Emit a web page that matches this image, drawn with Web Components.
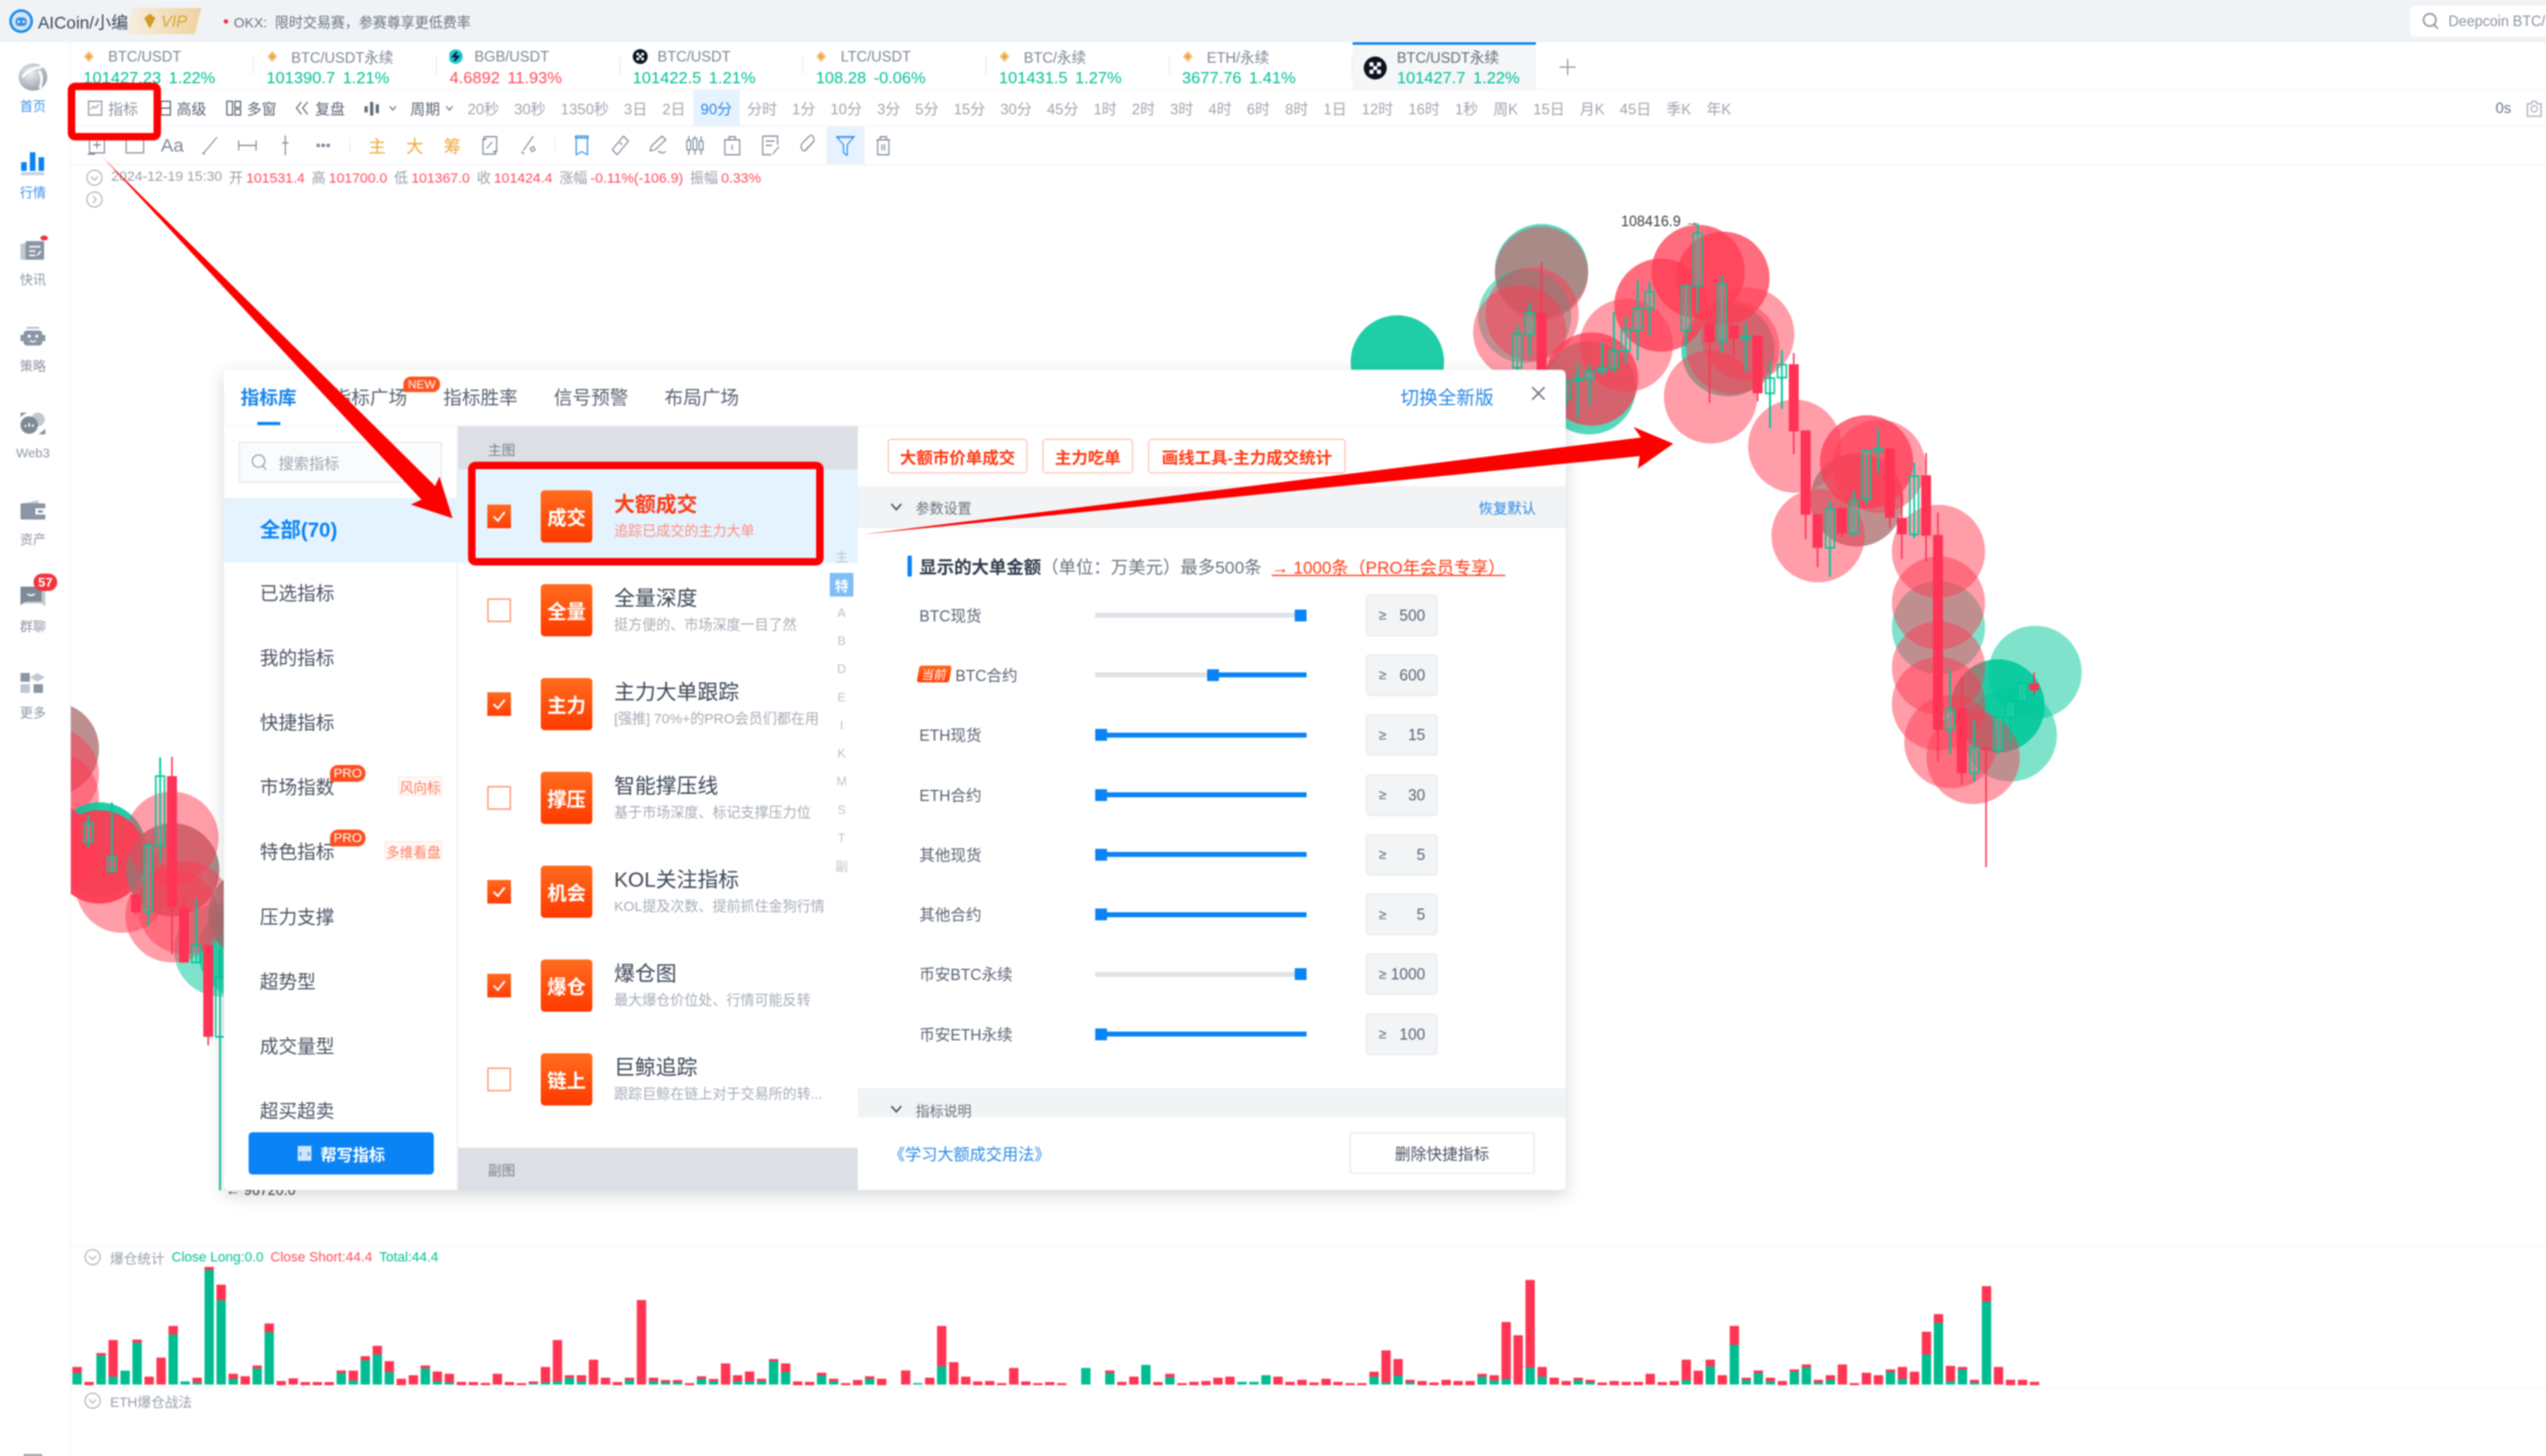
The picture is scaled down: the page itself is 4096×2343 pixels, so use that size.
<!DOCTYPE html>
<html lang="zh"><head><meta charset="utf-8"><title>AICoin</title>
<style>
html,body{margin:0;padding:0;background:#fff;overflow:hidden}
body{font-family:"Liberation Sans","Noto Sans CJK SC",sans-serif}
</style></head><body>
<ai-app></ai-app>
<script>
const G='#00c79a',R='#ff3b54',BL='#0a84f5',LB='#2b8ae6';
class Base extends HTMLElement{
  constructor(){super();this.attachShadow({mode:'open'});}
  connectedCallback(){this.shadowRoot.innerHTML=this.render();}
  a(n,d=''){return this.hasAttribute(n)?this.getAttribute(n):d;}
}
const def=(n,fn)=>customElements.define(n,class extends Base{render(){return fn.call(this);}});
const svg=(w,h,b,s='')=>`<svg width="${w}" height="${h}" viewBox="0 0 ${w} ${h}" ${s} style="display:block;flex:none" fill="none" stroke="currentColor">${b}</svg>`;

def('ai-app',function(){return `<style>
:host{display:grid;grid-template-rows:68px 1fr;width:4096px;height:2343px;position:relative;overflow:hidden;background:#fff;filter:blur(.8px)}
.m{display:grid;grid-template-columns:114px 1fr;min-height:0}
.c{display:flex;flex-direction:column;min-width:0;min-height:0}
</style>
<ai-topbar></ai-topbar>
<div class="m"><ai-sidebar></ai-sidebar>
<div class="c"><ai-symbol-tabs></ai-symbol-tabs><ai-period-bar></ai-period-bar><ai-draw-tools></ai-draw-tools><ai-chart-pane></ai-chart-pane><ai-liq-pane></ai-liq-pane></div></div>
<ai-annotations></ai-annotations>`;});

def('ai-topbar',function(){return `<style>
:host{display:flex;align-items:center;background:#f0f3f6;height:68px;padding-left:15px;box-sizing:border-box;overflow:hidden;color:#3d4857}
.n{font-size:27.500px;margin-left:8px;width:136px;white-space:nowrap}
.v{width:121px;height:42px;margin-left:6px;background:linear-gradient(90deg,#f7eee0,#efd2a0);clip-path:polygon(9% 0,100% 0,91% 100%,0 100%);display:flex;align-items:center;padding-left:26px;box-sizing:border-box;gap:6px;color:#d8a635;font-style:italic;font-size:26px}
.dot{width:7px;height:7px;border-radius:50%;background:#f0323c;margin-left:36px}
.t{font-size:22.500px;color:#6c7582;margin-left:9px;white-space:pre}
.s{margin-left:auto;width:218px;height:50px;background:#fff;border-radius:6px 0 0 6px;display:flex;align-items:center;padding-left:17px;gap:14px;color:#8b94a1;font-size:23px;white-space:nowrap;flex:none;box-sizing:border-box}
</style>
${svg(38,38,'<circle cx="19" cy="19" r="17" stroke="#1e88e5" stroke-width="4" fill="#cfe6fb"/><rect x="10" y="13" width="18" height="14" rx="6" fill="#3a8fe0" stroke="none"/><circle cx="15" cy="20" r="2" fill="#fff" stroke="none"/><circle cx="23" cy="20" r="2" fill="#fff" stroke="none"/>')}
<span class="n">AICoin/小编</span>
<span class="v">${svg(24,28,'<path d="M3 9 12 2l9 7-9 17z" fill="#cf9b2a" stroke="none"/>')}VIP</span>
<span class="dot"></span><span class="t">OKX:  限时交易赛，参赛尊享更低费率</span>
<span class="s">${svg(30,30,'<circle cx="14" cy="13" r="10" stroke-width="2.500"/><path d="M21 21l6 6" stroke-width="2.500"/>')}Deepcoin BTC/</span>`;});

const navIc={
home:`<svg width="46" height="44" viewBox="0 0 46 44"><defs><radialGradient id="g" cx=".4" cy=".35" r=".8"><stop offset="0" stop-color="#eef0f3"/><stop offset="1" stop-color="#8a929c"/></radialGradient></defs><ellipse cx="23" cy="22" rx="23" ry="22" fill="url(#g)"/><path d="M6 22C16 10 28 6 38 6M34 40C38 30 38 20 33 12" stroke="#fff" stroke-width="4" fill="none"/></svg>`,
market:svg(40,40,`<g fill="${BL}" stroke="none"><rect x="1" y="18" width="9" height="14"/><rect x="15" y="2" width="9" height="30"/><rect x="29" y="10" width="9" height="22"/><rect x="1" y="34" width="37" height="5" fill="#c9d1da"/></g>`),
news:`<svg width="40" height="34" viewBox="0 0 40 34"><rect x="0" y="6" width="12" height="26" fill="#c0c8d1"/><rect x="8" y="2" width="30" height="30" rx="2" fill="#8a95a5"/><path d="M14 11h18M14 18h10M14 25h10M27 25l6-7" stroke="#fff" stroke-width="2.500"/></svg>`,
bot:`<svg width="40" height="36" viewBox="0 0 40 36"><rect x="5" y="8" width="30" height="24" rx="5" fill="#8a95a5"/><rect x="0" y="15" width="5" height="10" fill="#8a95a5"/><rect x="35" y="15" width="5" height="10" fill="#8a95a5"/><rect x="10" y="2" width="20" height="3" fill="#b6bdc7"/><circle cx="14" cy="17" r="2.500" fill="#fff"/><circle cx="26" cy="17" r="2.500" fill="#fff"/><path d="M15 24q5 4 10 0" stroke="#fff" stroke-width="2" fill="none"/></svg>`,
web3:`<svg width="42" height="38" viewBox="0 0 42 38"><circle cx="29" cy="12" r="11" fill="#c0c8d1"/><circle cx="15" cy="21" r="14" fill="#7f8a99"/><path d="M9 24v-3M15 24v-6M21 24v-4" stroke="#fff" stroke-width="2.500"/><path d="M1 1h10L1 8zM41 36H30l11-9z" fill="#8a95a5"/></svg>`,
wallet:`<svg width="40" height="34" viewBox="0 0 40 34"><path d="M0 7 29 1v6z" fill="#c0c8d1"/><rect y="6" width="40" height="26" rx="2" fill="#8a95a5"/><rect x="24" y="14" width="16" height="10" fill="#fff"/><rect x="28" y="17" width="8" height="4" fill="#8a95a5"/></svg>`,
chat:`<svg width="40" height="34" viewBox="0 0 40 34"><path d="M6 0h34v32l-6-5H6z" fill="#c0c8d1"/><path d="M0 0h34v24H8l-8 6z" fill="#7f8a99"/><path d="M11 12q6 4 12 0" stroke="#fff" stroke-width="2.500" fill="none"/></svg>`,
more:`<svg width="40" height="34" viewBox="0 0 40 34"><rect x="0" y="0" width="15" height="14" fill="#8a95a5"/><path d="M27 0l12 7-12 7-12-7z" fill="#c0c8d1"/><rect y="18" width="15" height="14" fill="#c0c8d1"/><rect x="21" y="18" width="15" height="14" fill="#8a95a5"/></svg>`};
def('ai-nav-item',function(){const on=this.hasAttribute('on');return `<style>
:host{display:flex;flex-direction:column;align-items:center;justify-content:center;height:139.500px;position:relative;color:${on?'#3b93f0':'#8e97a4'};font-size:${this.a('fs','21')}px}
.i{height:44px;display:flex;align-items:center;justify-content:center;position:relative}
.l{margin-top:12px;line-height:26px;white-space:nowrap}
.d{position:absolute;right:-4px;top:-2px;width:12px;height:8px;border-radius:50%;background:#f0323c}
.b{position:absolute;left:21px;top:-16px;width:38px;height:28px;border-radius:14px;background:#f5333f;color:#fff;font-size:21px;font-weight:700;display:flex;align-items:center;justify-content:center}
</style><div class="i">${navIc[this.a('i')]}${this.hasAttribute('dot')?'<span class="d"></span>':''}${this.a('badge')?`<span class="b">${this.a('badge')}</span>`:''}</div><div class="l">${this.a('label')}</div>`;});
def('ai-sidebar',function(){return `<style>
:host{display:flex;flex-direction:column;width:114px;box-sizing:border-box;border-right:2px solid #f1f3f6;padding:5px 6px 0 0;background:#fff;height:2275px}
.s{margin-top:auto;margin-left:38px;width:30px;height:3px;background:#8e97a4}
</style>
<ai-nav-item i="home" label="首页" on></ai-nav-item><ai-nav-item i="market" label="行情" on></ai-nav-item>
<ai-nav-item i="news" label="快讯" dot></ai-nav-item><ai-nav-item i="bot" label="策略"></ai-nav-item>
<ai-nav-item i="web3" label="Web3"></ai-nav-item><ai-nav-item i="wallet" label="资产"></ai-nav-item>
<ai-nav-item i="chat" label="群聊" badge="57"></ai-nav-item><ai-nav-item i="more" label="更多"></ai-nav-item><div class="s"></div>`;});

const okx=s=>`<svg width="${s}" height="${s}" viewBox="0 0 40 40" style="display:block;flex:none"><circle cx="20" cy="20" r="20" fill="#0b1420"/><g fill="#fff"><rect x="10" y="10" width="7" height="7"/><rect x="23" y="10" width="7" height="7"/><rect x="16.500" y="16.500" width="7" height="7"/><rect x="10" y="23" width="7" height="7"/><rect x="23" y="23" width="7" height="7"/></g></svg>`;
const tabIc={bn:svg(40,24,'<path d="M9 3l8 9-8 9-8-9z" fill="#f6c27a" stroke="none"/><path d="M9 8l4 4-4 4-4-4z" fill="#e8a23a" stroke="none"/>'),
bgb:`<svg width="40" height="24" viewBox="0 0 40 24" style="display:block;flex:none"><circle cx="10" cy="12" r="11.500" fill="#1fc7d4"/><path d="M12 5 6 12h8l-6 7" stroke="#0b1420" stroke-width="3" fill="none"/></svg>`,
okx:`<span style="width:40px;display:block;flex:none">${okx(24)}</span>`};
def('ai-symbol-tab',function(){const c=this.a('dir')=='d'?'#ff4d5e':'#02c295',act=this.hasAttribute('active');
const v=`<div class="v"><span>${this.a('p')}</span><span>${this.a('q')}</span></div>`;
const css=`<style>:host{display:block;width:294.600px;height:76px;box-sizing:border-box;flex:none;position:relative;color:#7f8895;${act?`background:#f4f6f8;border-top:4px solid ${BL};color:#646e7c;`:''}}
:host(:not([active]))::after{content:"";position:absolute;right:0;top:23px;height:29px;width:2px;background:#ebeef1}
.l{display:flex;align-items:center;height:30px;font-size:23.500px;white-space:nowrap}
.v{display:flex;gap:12px;height:35px;align-items:center;font-size:26.500px;color:${c};white-space:nowrap;margin-top:2px}
.w{padding:8px 0 0 20px}.x{display:flex;gap:16px;padding:4px 0 0 18px;align-items:flex-start}.x>svg{margin-top:15px}</style>`;
if(act)return css+`<div class="x">${okx(37)}<div>${`<div class="l">${this.a('n')}</div>`+v}</div></div>`;
return css+`<div class="w"><div class="l">${tabIc[this.a('i')]}${this.a('n')}</div>${v}</div>`;});
def('ai-symbol-tabs',function(){return `<style>:host{display:flex;height:77px;border-bottom:2px solid #f2f4f7;box-sizing:border-box;align-items:flex-start}
.p{margin-left:36px;margin-top:25px;color:#8b94a1}</style>
<ai-symbol-tab i="bn" n="BTC/USDT" p="101427.23" q="1.22%"></ai-symbol-tab>
<ai-symbol-tab i="bn" n="BTC/USDT永续" p="101390.7" q="1.21%"></ai-symbol-tab>
<ai-symbol-tab i="bgb" n="BGB/USDT" p="4.6892" q="11.93%" dir="d"></ai-symbol-tab>
<ai-symbol-tab i="okx" n="BTC/USDT" p="101422.5" q="1.21%"></ai-symbol-tab>
<ai-symbol-tab i="bn" n="LTC/USDT" p="108.28" q="-0.06%"></ai-symbol-tab>
<ai-symbol-tab i="bn" n="BTC/永续" p="101431.5" q="1.27%"></ai-symbol-tab>
<ai-symbol-tab i="bn" n="ETH/永续" p="3677.76" q="1.41%"></ai-symbol-tab>
<ai-symbol-tab active n="BTC/USDT永续" p="101427.7" q="1.22%"></ai-symbol-tab>
<span class="p">${svg(30,30,'<path d="M15 2v26M2 15h26" stroke-width="2"/>')}</span>`;});

const periods='20秒 30秒 1350秒 3日 2日 90分 分时 1分 10分 3分 5分 15分 30分 45分 1时 2时 3时 4时 6时 8时 1日 12时 16时 1秒 周K 15日 月K 45日 季K 年K'.split(' ');
def('ai-period-bar',function(){const chev=svg(14,10,'<path d="M2 2l5 6 5-6" stroke-width="1.800"/>');
return `<style>:host{display:flex;align-items:stretch;height:59px;border-bottom:2px solid #f2f4f7;box-sizing:border-box;font-size:24px;color:#a0a7b1;white-space:nowrap}
.t{display:flex;align-items:center;gap:9px;color:#5d6776}
.p{display:flex;align-items:center;padding:0 12.150px}
.on{background:#e6f3fe;color:${LB}}
.r{margin-left:auto;display:flex;align-items:center;gap:24px;padding-right:6px;color:#6b7583}
</style>
<span class="t" style="margin-left:27px;color:#8d95a1">${svg(24,30,'<rect x="1.500" y="4" width="21" height="22" stroke-width="2"/><path d="M5 17l4-5 4 3 5-6" stroke-width="1.600"/>')}<span>指标</span></span>
<span class="t" style="margin-left:36px">${svg(17,30,'<rect x="1" y="4" width="15" height="22" stroke-width="2"/><path d="M1 15h15" stroke-width="2"/>')}<span>高级</span></span>
<span class="t" style="margin-left:32px">${svg(24,30,'<rect x="1" y="4" width="9" height="22" stroke-width="2"/><rect x="14" y="4" width="9" height="10" stroke-width="2"/><rect x="14" y="17" width="9" height="9" stroke-width="2"/>')}<span>多窗</span></span>
<span class="t" style="margin-left:30px">${svg(23,30,'<path d="M10 5 2 15l8 10M20 5l-8 10 8 10" stroke-width="2"/>')}<span>复盘</span></span>
<span class="t" style="margin-left:30px;gap:12px">${svg(28,30,'<path d="M4 12v10M13 5v22M22 9v14" stroke-width="5"/>')}${chev}</span>
<span class="t" style="margin-left:21px;gap:8px"><span>周期</span>${chev}</span>
<span style="width:10px"></span>
${periods.map(p=>`<span class="p${p=='90分'?' on':''}">${p}</span>`).join('')}
<span class="r"><span>0s</span><span style="color:#a6aeb8">${svg(26,30,'<path d="M2 8h6l2-4h6l2 4h6v20H2z" stroke-width="2"/><circle cx="13" cy="16" r="5" stroke-width="2"/>')}</span></span>`;});

const T=(b,c='')=>`<span class="k${c}">${svg(32,34,b,'stroke-width="1.800"')}</span>`;
def('ai-draw-tools',function(){return `<style>:host{display:flex;height:62px;border-bottom:2px solid #f2f4f7;box-sizing:border-box;padding-left:11.700px;color:#7d8897;align-items:stretch}
.k{width:60.600px;flex:none;display:flex;align-items:center;justify-content:center;font-size:28px}
.o{color:#efa83f}.b{color:${LB}}.h{background:#e6f3fe;color:${LB}}
.aa{font-size:30px}
.s{width:26.500px;flex:none;display:flex;align-items:center;justify-content:center}.s::after{content:"";width:2px;height:26px;background:#eceff2}
</style>
${T('<rect x="4" y="3" width="24" height="26"/><path d="M16 10v12M10 16h12M1 31h12"/>')}
${T('<rect x="2" y="5" width="28" height="24"/>')}
<span class="k aa">Aa</span>
${T('<path d="M5 30 27 4M3 29l5 2"/>')}
${T('<path d="M2 9v16M30 9v16M2 17h28"/>')}
${T('<path d="M16 1v32M11 13h10"/>')}
${T('<circle cx="8" cy="17" r="2" fill="currentColor"/><circle cx="16" cy="17" r="2" fill="currentColor"/><circle cx="24" cy="17" r="2" fill="currentColor"/>')}
<span class="s"></span>
<span class="k o">主</span><span class="k o">大</span><span class="k o">筹</span>
${T('<path d="M7 9V3h20v24h-6M25 25v6H5V7h6M11 22 20 11"/>')}
${T('<path d="M25 2 9 25M6 27l4 4M20 22l3 5 5-3-3-5z"/>')}
<span class="s"></span>
${T('<path d="M6 2h20v3H6zM7 5v27l9-5 9 5V5"/>','  b')}
${T('<path d="M22 2l8 8-18 22-8-8zM16 12l4 4"/>')}
${T('<path d="M24 2l6 6-17 16-8 2 2-8zM18 26q5 5 12 1"/>')}
${T('<path d="M6 2v30M16 2v30M26 2v30"/><rect x="3" y="9" width="6" height="15" fill="#fff"/><rect x="13" y="6" width="6" height="18" fill="#fff"/><rect x="23" y="10" width="6" height="14" fill="#fff"/>')}
${T('<path d="M4 8h24v24H4zM11 8V3h10v5M16 16v8"/>')}
${T('<path d="M4 2h24v14M4 2v30h14M9 10h14M9 17h10M20 31l10-12"/>')}
${T('<path d="M26 10 13 24q-4 4-7-1t1-10L18 2q5-3 7 2t-2 9L12 24"/>')}
${T('<path d="M2 3h28L19 16v17l-6-4V16zM6 3v3M11 3v3M16 3v3M21 3v3M26 3v3"/>','  h')}
${T('<path d="M5 8h22M11 8V3h10v5M7 8v24h18V8M14 15v10M18 15v10"/>')}`;});

const X8=x=>2150+x/1.2544,Y8=y=>300+y/1.3876,X12=x=>100+x/3,Y12=y=>1120+y/1.823;
function chartSvg(){
 let s='';const c=(x,y,col,n=1)=>{
  if(col==G&&n==2){s+=`<circle cx="${x.toFixed(1)}" cy="${y.toFixed(1)}" r="75" fill="${col}" fill-opacity=".67"/>`;return;}
  for(let i=0;i<n;i++)s+=`<circle cx="${x.toFixed(1)}" cy="${y.toFixed(1)}" r="75" fill="${col}" fill-opacity=".5"/>`;};
 const z8=(x,y,col,n)=>c(X8(x),Y8(y),col,n),z12=(x,y,col,n)=>c(X12(x),Y12(y),col,n);
 z8(123,392,G,3);
 z8(414,188,G,2);z8(414,194,R,1);z8(380,290,G,1);z8(395,285,R,1);z8(370,325,R,1);
 z8(510,450,G,2);z8(585,355,R,1);z8(515,430,R,2);
 z8(790,365,G,2);z8(800,360,R,1);z8(830,330,R,1);z8(755,470,R,1);
 z8(655,265,R,2);z8(730,190,R,2);z8(780,205,R,2);
 z8(925,580,R,1);z8(1050,700,G,1);z8(1050,700,R,1);z8(972,780,R,1);z8(1070,615,R,2);z8(1095,625,R,1);
 z8(1215,985,G,1);z8(1335,1160,G,3);z8(1410,1085,G,1);z8(1360,1225,G,1);
 z8(1215,815,R,1);z8(1215,930,R,1);z8(1215,1075,R,1);z8(1215,1155,R,1);z8(1240,1240,R,1);z8(1285,1275,R,1);
 z12(-47,155,G,1);z12(-47,155,R,1);z12(-47,230,R,1);z12(-47,300,R,1);
 z12(180,449,G,3);z12(-60,452,R,3);z12(180,472,R,4);z12(290,558,R,1);z12(533,510,G,2);z12(530,417,R,1);z12(533,510,R,1);
 z12(765,745,G,1);z12(880,750,G,2);z12(530,645,R,1);z12(590,620,R,1);z12(930,640,G,1);z12(930,640,R,1);
 const k=(X,Y,x,t,b,wt,wb,col)=>{const cx=X(x),C=col=='g'?G:'#ff3355';
  s+=`<path d="M${cx} ${Y(wt)}V${Y(wb)}" stroke="${C}" stroke-width="${col=='g'?3:2.5}"/>`;
  s+=col=='g'?`<rect x="${cx-7}" y="${Y(t)}" width="14" height="${Y(b)-Y(t)}" fill="#fff" fill-opacity=".08" stroke="${C}" stroke-width="2.500"/>`:`<rect x="${cx-8}" y="${Y(t)}" width="16" height="${Y(b)-Y(t)}" fill="${C}"/>`;};
 [[365,330,405,310,420,'g'],[390,282,332,258,380,'g'],[414,282,410,170,420,'r'],[463,435,475,430,490,'g'],[487,428,433,398,518,'g'],[511,413,430,398,490,'g'],[536,405,413,348,420,'g'],[560,367,405,280,415,'g'],[584,320,367,290,395,'g'],[608,273,322,210,388,'g'],[632,235,273,213,333,'g'],[705,222,322,222,358,'g'],[729,105,222,82,283,'g'],[753,305,348,300,483,'r'],[778,218,345,198,372,'g'],[802,310,340,310,378,'r'],[826,335,340,305,415,'g'],[850,333,462,333,480,'r'],[875,428,462,392,540,'g'],[899,398,427,365,497,'g'],[923,397,547,372,598,'r'],[947,545,733,545,788,'r'],[971,732,807,732,850,'r'],[996,720,807,703,872,'g'],[1020,718,775,718,783,'r'],[1044,700,775,680,780,'g'],[1069,590,698,590,710,'g'],[1093,585,592,540,640,'g'],[1117,585,740,585,762,'r'],[1141,740,777,685,832,'r'],[1166,647,777,617,785,'g'],[1190,645,780,595,838,'r'],[1214,778,1213,728,1285,'r'],[1238,1168,1213,1078,1268,'g'],[1262,1165,1310,1095,1335,'r'],[1287,1253,1310,1190,1330,'g'],[1311,1253,1257,1253,1520,'r'],[1335,1185,1260,1185,1268,'g'],[1360,1150,1185,1120,1240,'g'],[1384,1110,1150,1108,1165,'g'],[1408,1110,1125,1085,1135,'r']].forEach(a=>k(X8,Y8,...a));
 [[126,373,428,348,445,'g'],[240,472,515,312,515,'g'],[356,583,635,583,642,'r'],[415,438,633,433,675,'g'],[473,235,438,180,485,'g'],[530,235,620,178,757,'r'],[588,620,782,598,782,'r'],[647,732,782,595,782,'g'],[705,730,1000,730,1025,'r'],[762,825,1000,740,1450,'g']].forEach(a=>k(X12,Y12,...a));
 s+=`<text x="2608" y="364" font-size="23" fill="#3c3f44" font-family="Liberation Sans">108416.9 →</text>`;
 s+=`<text x="363" y="1923" font-size="23" fill="#3c3f44" font-family="Liberation Sans">← 96720.0</text>`;
 return s;
}
const circ=(y,d='M9 13l6 6 6-6')=>`<svg width="28" height="28" viewBox="0 0 30 30" fill="none" stroke="#a3abb6" stroke-width="1.800" style="display:block;flex:none"><circle cx="15" cy="15" r="13"/><path d="${d}"/></svg>`;
def('ai-chart-pane',function(){return `<style>
:host{display:block;position:relative;flex:1;min-height:0;color:#9aa1ab;font-size:22.600px}
svg.c{position:absolute;left:0;top:0}
.r{display:flex;align-items:center;height:36px;padding-left:24px;position:relative;white-space:nowrap;gap:11px}
.r>span{padding-bottom:4px}
.g{display:flex;gap:5px;align-items:baseline}.v{color:#ff4d5e}
ai-indicator-dialog{position:absolute;left:246px;top:329px}
</style>
<svg class="c" width="3982" height="1741" viewBox="114 266 3982 1741">${chartSvg()}</svg>
<div class="r" style="margin-top:2px">${circ()}<span style="margin-left:2px">2024-12-19 15:30</span>
<span class="g">开 <span class="v">101531.4</span></span><span class="g">高 <span class="v">101700.0</span></span><span class="g">低 <span class="v">101367.0</span></span><span class="g">收 <span class="v">101424.4</span></span><span class="g">涨幅 <span class="v">-0.11%(-106.9)</span></span><span class="g">振幅 <span class="v">0.33%</span></span></div>
<div class="r" style="height:34px">${circ(0,'M12 9l6 6-6 6')}</div>
<ai-indicator-dialog></ai-indicator-dialog>`;});

const L1=[[715,745],[787,0],[648,660],[585,762],[733,733],[583,598],[762,0],[670,0],[517,558],[785,785],[767,790],[232,247],[318,393],[748,773],[760,0],[708,722],[505,547],[783,0],[770,0],[788,0],[788,0],[788,0],[732,745],[733,780],[663,683],[613,655],[687,740],[772,0],[755,0],[708,722],[737,785],[748,790],[787,0],[788,0],[792,0],[748,0],[788,0],[793,0],[785,795],[715,790],[585,785],[755,768],[755,785],[680,0],[767,0],[788,0],[767,780],[392,0],[767,785],[778,790],[778,790],[793,0],[760,773],[773,785],[698,0],[755,785],[737,785],[772,785],[677,688],[698,740],[785,0],[787,0],[743,757],[772,785],[793,0],[778,0],[760,773],[772,0],[0,0],[732,0],[793,793],[767,0],[517,712],[692,0],[762,0],[785,0],[783,0],[793,0],[720,0],[785,0],[793,0],[788,0],
[793,0],[0,0],[720,720],[0,0],[732,745],[787,0],[762,0],[705,705],[788,0],[748,765],[793,0],[787,0],[783,0],[767,0],[762,0],[787,787],[787,787],[755,755],[762,0],[787,0],[777,0],[790,0],[772,0],[787,0],[793,0],[793,0],[738,762],[635,790],[677,757],[777,790],[783,0],[790,0],[777,0],[783,0],[783,0],[748,762],[755,780],[498,773],[562,0],[295,718],[715,762],[767,0],[783,0],[767,780],[777,790],[790,0],[783,0],[787,0],[787,0],[748,0],[788,0],[783,0],[680,780],[733,0],[680,712],[755,0],[517,608],[767,778],[732,745],[767,785],[783,0],[727,738],[703,717],[777,790],[755,778],[703,0],[793,0],[743,0],[755,0],[727,740],[715,773],[738,0],[545,655],[460,502],[710,785],[715,728],[777,790],[325,400],[715,0],[777,0],[777,0],[787,0]];
def('ai-liq-pane',function(){const y=t=>196-(800-t)/3-6;let b='';
L1.forEach((d,i)=>{if(!d[0])return;const x=(124+19.32*i-7.5).toFixed(1);const[t,g]=d;const H=y(800);
 if(g){if(t<g)b+=`<rect x="${x}" y="${y(t)}" width="15" height="${y(g)-y(t)+.5}" fill="#ff3553"/>`;b+=`<rect x="${x}" y="${y(g)}" width="15" height="${H-y(g)}" fill="#00bd91"/>`;}
 else b+=`<rect x="${x}" y="${y(t)}" width="15" height="${H-y(t)+(t>770?1:0)}" fill="#ff3553"/>`;});
return `<style>:host{display:block;height:338px;border-top:2px solid #f7f8fa;box-sizing:border-box;position:relative;font-size:22px;color:#9aa1ab;white-space:nowrap}
.r{display:flex;align-items:center;height:32px;padding-left:21px;gap:11px;padding-top:0}
.b{display:block;margin-left:0;margin-top:-1px;border-bottom:2px solid #f7f8fa}
</style>
<div class="r">${circ()}<span style="margin-left:3px">爆仓统计</span><span style="color:#02c295">Close Long:0.0</span><span style="color:#ff4d5e">Close Short:44.4</span><span style="color:#02c295">Total:44.4</span></div>
<svg class="b" width="3982" height="194" viewBox="114 0 3982 194" style="overflow:hidden">${b}</svg>
<div class="r" style="margin-top:4px">${circ()}<span style="margin-left:3px">ETH爆仓战法</span></div>`;});

def('ai-indicator-row',function(){const sel=this.hasAttribute('sel'),ck=this.hasAttribute('ck');return `<style>
:host{display:grid;grid-template-columns:47px 38px 48px 83px 35px 1fr;height:151px;align-items:center;${sel?'background:#e5f3fe;':''}}
.c{grid-column:2;width:38px;height:38px;box-sizing:border-box;display:flex;align-items:center;justify-content:center;${ck?'background:linear-gradient(#ff6a20,#ff3d06);':'border:2px solid #ff8a60;background:#fff;'}color:#fff}
.i{grid-column:4;width:83px;height:84px;border-radius:6px;background:linear-gradient(#ff6c1e,#ff3a00);color:#fff;font-size:31px;font-weight:700;display:flex;align-items:center;justify-content:center;white-space:nowrap}
.t{grid-column:6;min-width:0}
.h{font-size:33.500px;line-height:40px;color:${sel?'#ff3b14':'#3d4857'};white-space:nowrap;${sel?'font-weight:700;':''}}
.s{font-size:22.600px;line-height:30px;margin-top:8px;color:${sel?'#ff8f84':'#a6adb7'};white-space:nowrap}
</style><span class="c">${ck?svg(24,24,'<path d="M3 12l7 7L21 5" stroke-width="3"/>'):''}</span><span class="i">${this.a('ic')}</span><div class="t"><div class="h">${this.a('t')}</div><div class="s">${this.a('s')}</div></div>`;});
def('ai-param-row',function(){const v=+this.a('v',0);return `<style>
:host{display:grid;grid-template-columns:283px 340px 211px;height:96.300px;align-items:center;padding-left:99px;font-size:25px;color:#5a6473;white-space:nowrap}
.l{display:flex;align-items:center;gap:8px;padding-bottom:3px}
.cur{display:flex;align-items:center;justify-content:center;margin-left:-2px;width:52px;height:27px;background:linear-gradient(#ff6a20,#ff3d06);border-radius:4px;color:#fff;font-size:20px;transform:skewX(-10deg)}
.t{position:relative;height:8px;background:#dfe2e6}
.f{position:absolute;left:${v}%;right:0;top:0;bottom:0;background:${BL}}
.k{position:absolute;left:calc((100% - 19px)*${v/100});top:-5.500px;width:19px;height:19px;background:${BL}}
.b{grid-column:3;margin-left:95px;width:116px;height:67px;box-sizing:border-box;background:#f2f4f6;border:2px solid #e8ebee;border-radius:6px;display:flex;align-items:center;justify-content:space-between;padding:0 18px 0 19px;font-size:25px;color:#5a6473}
.g{font-size:22px}
</style><div class="l">${this.hasAttribute('cur')?'<span class="cur">当前</span>':''}${this.a('l')}</div><div class="t"><span class="f"></span><span class="k"></span></div><div class="b"><span class="g">≥</span><span>${this.a('n')}</span></div>`;});

def('ai-indicator-dialog',function(){
const row=(t,o)=>`<div class="li${o.on?' on':''}"><span>${t}</span>${o.pro?'<span class="pro">PRO</span>':''}${o.tag?`<span class="tag">${o.tag}</span>`:''}</div>`;
return `<style>
:host{display:grid;grid-template-rows:91px 1fr;grid-template-columns:377px 643px 1fr;width:2159px;height:1320px;background:#fff;border-radius:8px;box-shadow:0 8px 28px rgba(40,50,60,.2);overflow:visible;color:#3d4857}
.hd{grid-column:1/4;display:flex;align-items:center;padding:0 0 5px 27px;border-bottom:2px solid #f3f5f7;box-sizing:border-box;font-size:30px;color:#5a6473;gap:58px;white-space:nowrap;position:relative}
.hd b{font-weight:700;color:#1a86ea;position:relative}
.hd b::after{content:"";position:absolute;left:27px;width:37px;bottom:-25px;height:5px;background:${BL}}
.nw{position:relative}.new{position:absolute;right:-53px;top:-9px;width:59px;height:25px;border-radius:12px 12px 12px 2px;background:#ff5320;color:#fff;font-size:19px;display:flex;align-items:center;justify-content:center}
.sw{margin-left:auto;color:${LB}}
.x{margin:-8px 32px 0 2px;color:#6f7985}
.L{position:relative;border-right:2px solid #eceef1;box-sizing:border-box;overflow:hidden;display:flex;flex-direction:column;border-radius:0 0 0 8px}
.se{margin:25px 24px 24px;height:66px;flex:none;box-sizing:border-box;border:2px solid #e6e9ec;background:#fafbfc;display:flex;align-items:center;padding-left:18px;gap:18px;color:#a0a7b1;font-size:24.500px}
.li{flex:none;height:104.100px;box-sizing:border-box;padding:0 0 9px 58px;display:flex;align-items:center;font-size:30px;color:#4a5463;position:relative;white-space:nowrap}
.li.on{background:#e5f3fe;color:${BL};font-size:33px;font-weight:700;height:103.500px;padding-bottom:5px}
.pro{position:absolute;left:171px;top:14px;width:57px;height:27px;border-radius:13px 13px 13px 2px;background:#ff4e1f;color:#fff;font-size:21px;display:flex;align-items:center;justify-content:center}
.tag{position:absolute;right:24px;top:33px;height:30px;border:1px solid #ffd9c8;box-sizing:border-box;color:#ff7a60;font-size:22px;padding:0 1px;display:flex;align-items:center;background:#fffaf7}
.bt{position:absolute;left:40px;bottom:25px;width:298px;height:68px;background:${BL};border-radius:6px;color:#fff;font-size:26px;font-weight:700;display:flex;align-items:center;justify-content:center;gap:13px}
.M{position:relative;display:flex;flex-direction:column;overflow:hidden}
.sh{flex:none;background:#dcdfe4;height:69px;display:flex;align-items:center;padding:3px 0 0 48px;box-sizing:border-box;font-size:22px;color:#7a8390}
.idx{position:absolute;left:598px;top:187px;width:38px;display:flex;flex-direction:column;align-items:center;font-size:20px;color:#bdc3cb}
.idx span{height:45.300px;width:38px;display:flex;align-items:center;justify-content:center}
.idx .a{background:#80bdf7;color:#fff;height:38px;margin:3.600px 0;font-weight:700;font-size:22px}
.R{display:flex;flex-direction:column;min-width:0;border-radius:0 0 8px 0;overflow:hidden}
.tg{height:96px;flex:none;display:flex;align-items:center;padding-left:48px;gap:24px}
.tg span{height:56px;box-sizing:border-box;border:2px solid #ffc3b5;border-radius:6px;display:flex;align-items:center;justify-content:center;font-size:26.500px;color:#ff3b14;font-weight:700;white-space:nowrap}
.sc{flex:none;height:68px;background:#f1f3f5;display:flex;align-items:center;font-size:22.500px;color:#6a7380;padding:0 48px 0 52px;gap:21px;box-sizing:border-box}
.sc svg{color:#3d4857}
.ti{flex:none;height:92px;box-sizing:border-box;padding:30px 0 0 80px;display:flex;align-items:center;font-size:28px;white-space:nowrap;color:#6b7480}
.ti i{width:7px;height:34px;background:${BL};border-radius:2px;margin-right:12px}
.ti b{color:#2f3a4a}.ti u{color:#ff3b14;margin-left:16px;font-size:27.500px}
.ft{flex:none;height:117px;display:flex;align-items:center;padding:0 50px 3px 50px;box-sizing:border-box;justify-content:space-between;font-size:26px;color:${LB}}
.del{width:298px;height:67px;box-sizing:border-box;border:2px solid #e6e9ec;border-radius:4px;color:#4a5361;font-size:25.300px;display:flex;align-items:center;justify-content:center}
</style>
<div class="hd"><b>指标库</b><span class="nw">指标广场<span class="new">NEW</span></span><span>指标胜率</span><span>信号预警</span><span>布局广场</span><span class="sw">切换全新版</span><span class="x">${svg(24,24,'<path d="M2 2l20 20M22 2 2 22" stroke-width="2.500"/>')}</span></div>
<div class="L"><div class="se">${svg(26,28,'<circle cx="12" cy="12" r="10" stroke-width="2.200"/><path d="M19 20l5 6" stroke-width="2.200"/>')}搜索指标</div>
${row('全部(70)',{on:1})}${row('已选指标',{})}${row('我的指标',{})}${row('快捷指标',{})}${row('市场指数',{pro:1,tag:'风向标'})}${row('特色指标',{pro:1,tag:'多维看盘'})}${row('压力支撑',{})}${row('超势型',{})}${row('成交量型',{})}${row('超买超卖',{})}
<div class="bt">${svg(24,30,'<rect x="1" y="3" width="22" height="24" fill="#cfe5fb" stroke="none"/><path d="M7 13l-3 3 3 3M17 13l3 3-3 3" stroke="#0a84f5" stroke-width="1.500"/>')}帮写指标</div></div>
<div class="M"><div class="sh">主图</div>
<ai-indicator-row sel ck ic="成交" t="大额成交" s="追踪已成交的主力大单"></ai-indicator-row>
<ai-indicator-row ic="全量" t="全量深度" s="挺方便的、市场深度一目了然"></ai-indicator-row>
<ai-indicator-row ck ic="主力" t="主力大单跟踪" s="[强推] 70%+的PRO会员们都在用"></ai-indicator-row>
<ai-indicator-row ic="撑压" t="智能撑压线" s="基于市场深度、标记支撑压力位"></ai-indicator-row>
<ai-indicator-row ck ic="机会" t="KOL关注指标" s="KOL提及次数、提前抓住金狗行情"></ai-indicator-row>
<ai-indicator-row ck ic="爆仓" t="爆仓图" s="最大爆仓价位处、行情可能反转"></ai-indicator-row>
<ai-indicator-row ic="链上" t="巨鲸追踪" s="跟踪巨鲸在链上对于交易所的转..."></ai-indicator-row>
<div class="sh" style="margin-top:auto;height:68px;padding-top:0">副图</div>
<div class="idx"><span>主</span><span class="a">特</span><span>A</span><span>B</span><span>D</span><span>E</span><span>I</span><span>K</span><span>M</span><span>S</span><span>T</span><span>副</span></div></div>
<div class="R"><div class="tg"><span style="width:225px">大额市价单成交</span><span style="width:146px">主力吃单</span><span style="width:318px">画线工具-主力成交统计</span></div>
<div class="sc">${svg(20,14,'<path d="M2 2l8 9 8-9" stroke-width="2.500"/>')}<span>参数设置</span><span style="margin-left:auto;color:${LB};font-size:23px">恢复默认</span></div>
<div class="ti"><i></i><b>显示的大单金额</b>（单位：万美元）最多500条<u>→ 1000条（PRO年会员专享）</u></div>
<ai-param-row l="BTC现货" v="100" n="500"></ai-param-row>
<ai-param-row cur l="BTC合约" v="56" n="600"></ai-param-row>
<ai-param-row l="ETH现货" v="0" n="15"></ai-param-row>
<ai-param-row l="ETH合约" v="0" n="30"></ai-param-row>
<ai-param-row l="其他现货" v="0" n="5"></ai-param-row>
<ai-param-row l="其他合约" v="0" n="5"></ai-param-row>
<ai-param-row l="币安BTC永续" v="100" n="1000"></ai-param-row>
<ai-param-row l="币安ETH永续" v="0" n="100"></ai-param-row>
<div class="sc" style="margin-top:auto;height:47px;align-items:flex-start;padding-top:19px">${svg(20,14,'<path d="M2 2l8 9 8-9" stroke-width="2.500"/>','style="margin-top:8px"')}<span>指标说明</span></div>
<div class="ft"><span>《学习大额成交用法》</span><span class="del">删除快捷指标</span></div></div>`;});

def('ai-annotations',function(){return `<style>:host{position:absolute;left:0;top:0;width:4096px;height:2343px;pointer-events:none;display:block}</style>
<svg width="4096" height="2343" viewBox="0 0 4096 2343" style="display:block">
<rect x="115" y="139" width="138" height="81" rx="6" fill="none" stroke="#f00" stroke-width="12"/>
<rect x="759" y="749" width="560" height="155" rx="6" fill="none" stroke="#f00" stroke-width="12"/>
<path d="M165 253 700 782 707 767 728 834 661 812 678 804Z" fill="#f00"/>
<path d="M1387 860 2640 704 2628 687 2692 714 2635 754 2638 734Z" fill="#f00"/>
</svg>`;});
</script>
</body></html>
